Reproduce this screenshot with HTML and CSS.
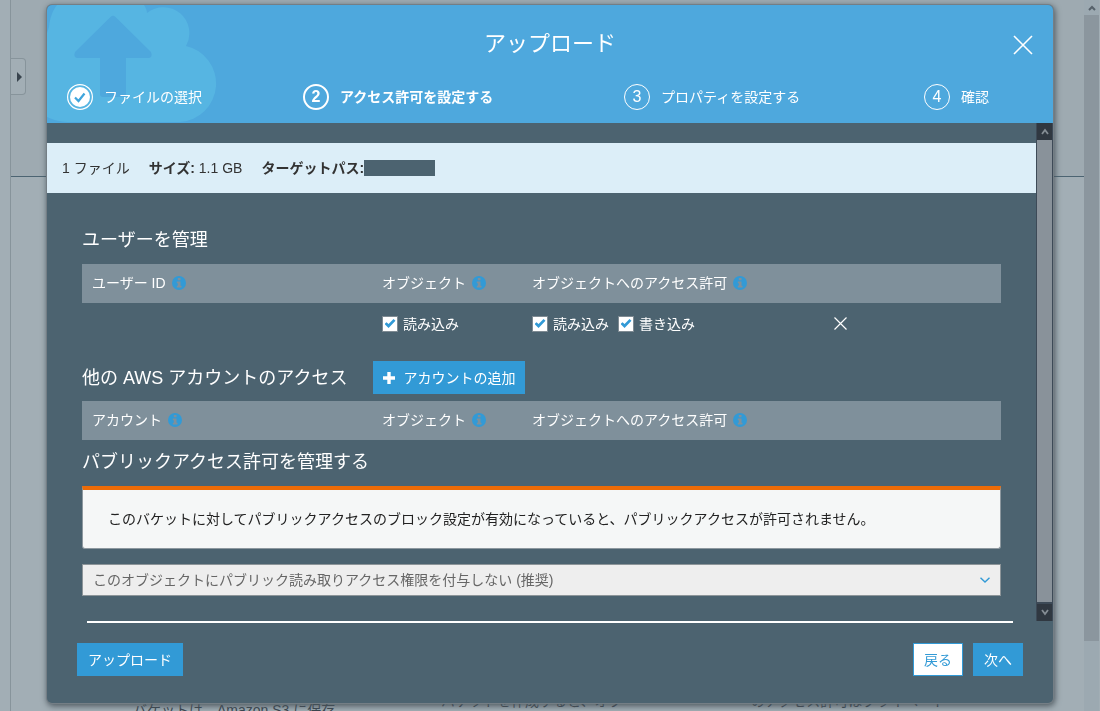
FILE: index.html
```html
<!DOCTYPE html>
<html lang="ja">
<head>
<meta charset="utf-8">
<title>アップロード</title>
<link rel="stylesheet" href="styles.css">
</head>
<body>
<svg class="defs" aria-hidden="true">
  <symbol id="info" viewBox="0 0 14 14"><circle cx="7" cy="7" r="7" fill="#329ad6"/><path d="M5.800 2h2.700v2.200H5.800zM4.800 5.400h3.700v4.400h1V11.600H4.800V9.800h1V7.200h-1z" fill="#7f909b"/></symbol>
</svg>
<div class="page">
  <aside class="rail"></aside>
  <main class="backdrop">
    <button class="rail-tab" type="button" aria-label="メニューを開く"><svg width="5" height="10" viewBox="0 0 5 10"><path d="M0 0L5 5L0 10z" fill="#39444e"/></svg></button>
    <div class="backdrop-top"></div>
    <div class="backdrop-cards">
      <p class="card-low">バケットは、Amazon S3 に保存</p>
      <p>バケットを作成すると、オブ</p>
      <p>のアクセス許可はプライベート</p>
    </div>
  </main>
  <div class="page-scroll"><span class="page-arrow"><svg width="8" height="6" viewBox="0 0 8 6"><path d="M1 5L4 2L7 5" fill="none" stroke="#56616a" stroke-width="2"/></svg></span><span class="page-thumb"></span></div>
</div>

<div class="modal" role="dialog" aria-labelledby="title">
  <header class="header">
    <svg class="cloud" width="170" height="118" viewBox="0 0 170 118" aria-hidden="true">
      <path d="M2 22C3 12 6 5 10 0H97C99 3 100 6 100 8A26 26 0 0 1 139 41A38.500 38.500 0 0 1 133 117H25C14 117 6 115 0 112V28z" fill="#56b5e2"/>
      <path d="M63.500 12Q66 9.500 68.500 12L104 47Q106 53 101 53H79V89Q79 92 76 92H56Q53 92 53 89V53H31Q26 53 28 47z" fill="#4ea8dd"/>
    </svg>
    <h1 id="title">アップロード</h1>
    <button class="close" type="button" aria-label="閉じる"><svg width="20" height="20" viewBox="0 0 20 20"><path d="M1 1L19 19M19 1L1 19" stroke="#fff" stroke-width="1.600"/></svg></button>
    <ol class="steps">
      <li><svg width="26" height="26" viewBox="0 0 26 26" aria-hidden="true"><circle cx="13" cy="13" r="12.400" fill="none" stroke="#fff" stroke-width="1.200"/><circle cx="13" cy="13" r="10" fill="#fff"/><path d="M8 13.500L11.500 17L17.500 9.500" fill="none" stroke="#3fa5dc" stroke-width="2.200"/></svg><span>ファイルの選択</span></li>
      <li class="current"><span class="num">2</span><span>アクセス許可を設定する</span></li>
      <li><span class="num">3</span><span>プロパティを設定する</span></li>
      <li><span class="num">4</span><span>確認</span></li>
    </ol>
  </header>

  <div class="body">
    <div class="content">
      <div class="summary">
        <span>1 ファイル</span>
        <span><b>サイズ:</b> 1.1 GB</span>
        <span class="path"><b>ターゲットパス:</b><span class="redacted"></span></span>
      </div>
      <div class="sections">
        <h2>ユーザーを管理</h2>
        <table>
          <colgroup><col class="c-id"><col class="c-obj"><col class="c-perm"><col></colgroup>
          <thead><tr>
            <th>ユーザー ID<svg class="info"><use href="#info"/></svg></th>
            <th>オブジェクト<svg class="info"><use href="#info"/></svg></th>
            <th>オブジェクトへのアクセス許可<svg class="info"><use href="#info"/></svg></th>
            <th></th>
          </tr></thead>
          <tbody><tr>
            <td></td>
            <td><label><input type="checkbox" checked>読み込み</label></td>
            <td><div class="checks"><label><input type="checkbox" checked>読み込み</label><label><input type="checkbox" checked>書き込み</label></div></td>
            <td><button class="remove" type="button" aria-label="削除"><svg width="13" height="13" viewBox="0 0 13 13"><path d="M.5.5L12.500 12.500M12.500.5L.5 12.500" stroke="#fff" stroke-width="1.200"/></svg></button></td>
          </tr></tbody>
        </table>
        <div class="account-head">
          <h2>他の AWS アカウントのアクセス</h2>
          <button class="btn" type="button"><svg width="12" height="12" viewBox="0 0 12 12"><path d="M6 0V12M0 6H12" stroke="#fff" stroke-width="3.400"/></svg>アカウントの追加</button>
        </div>
        <table>
          <colgroup><col class="c-id"><col class="c-obj"><col class="c-perm"><col></colgroup>
          <thead><tr>
            <th>アカウント<svg class="info"><use href="#info"/></svg></th>
            <th>オブジェクト<svg class="info"><use href="#info"/></svg></th>
            <th>オブジェクトへのアクセス許可<svg class="info"><use href="#info"/></svg></th>
            <th></th>
          </tr></thead>
        </table>
        <h2 class="public-title" id="public">パブリックアクセス許可を管理する</h2>
        <p class="alert">このバケットに対してパブリックアクセスのブロック設定が有効になっていると、パブリックアクセスが許可されません。</p>
        <div class="select">
          <select aria-labelledby="public"><option>このオブジェクトにパブリック読み取りアクセス権限を付与しない (推奨)</option></select>
          <svg width="10" height="6" viewBox="0 0 10 6" aria-hidden="true"><path d="M.5.7L5 5L9.500.7" fill="none" stroke="#329ad6" stroke-width="1.400"/></svg>
        </div>
      </div>
    </div>
    <div class="scrollbar" aria-hidden="true">
      <span class="arrow"><svg width="8" height="7" viewBox="0 0 8 7"><path d="M1 6L4 2L7 6" fill="none" stroke="#858d94" stroke-width="1.800"/></svg></span>
      <span class="thumb"></span>
      <span class="arrow"><svg width="8" height="7" viewBox="0 0 8 7"><path d="M1 1L4 5L7 1" fill="none" stroke="#858d94" stroke-width="1.800"/></svg></span>
    </div>
  </div>

  <footer>
    <hr>
    <div class="actions">
      <button class="btn upload" type="button">アップロード</button>
      <button class="btn back" type="button">戻る</button>
      <button class="btn" type="button">次へ</button>
    </div>
  </footer>
</div>
</body>
</html>
```
FILE: styles.css
```css
* { box-sizing: border-box; }
html, body { height: 100%; }
body {
  margin: 0;
  overflow: hidden;
  background: #a2aeb5;
  color: #fff;
  font: 14px/20px "Liberation Sans", "Noto Sans CJK JP", sans-serif;
}
h1, h2, p, ol { margin: 0; padding: 0; font-weight: normal; }
button, select, input { font: inherit; margin: 0; }
button { cursor: pointer; }
svg { display: block; flex: none; }
.defs { position: absolute; width: 0; height: 0; }

/* Dimmed page */
.page { display: flex; height: 100vh; }
.rail { width: 11px; border-right: 1px solid #87949b; }
.backdrop { flex: 1; display: flex; flex-direction: column; position: relative; overflow: hidden; }
.backdrop-top { height: 177px; flex: none; background: #9eaab1; border-bottom: 1px solid #4c6472; }
.rail-tab {
  position: absolute; top: 58px; left: -1px;
  width: 16px; height: 37px; padding: 0 0 0 7px;
  background: #a2aeb5; border: 1px solid #87949b; border-left: 0; border-radius: 0 4px 4px 0;
}
.backdrop-cards {
  display: grid; grid-template-columns: 308px 310px 1fr;
  margin-top: auto; padding-left: 122px; height: 20px;
  color: #39444e; white-space: nowrap;
}
.card-low { padding-top: 9px; }
.page-scroll { width: 16px; display: flex; flex-direction: column; background: #9ca9b1; border-right: 1px solid #a2aeb5; }
.page-arrow { height: 15px; display: grid; place-items: center; }
.page-thumb { height: 88%; background: #8b969e; }

/* Dialog */
.modal {
  position: fixed; inset: 5px 47px 8px;
  display: flex; flex-direction: column;
  background: #4c6370;
  border-radius: 5px;
  overflow: hidden;
  box-shadow: 0 0 0 1px #747e85, 1px 2px 6px 1px #4b565d;
}
.header { position: relative; flex: none; height: 118px; background: #4ea8dd; }
.cloud { position: absolute; left: 0; top: 0; }
h1 { position: relative; padding-top: 25px; font-size: 22px; line-height: 28px; text-align: center; }
.close { position: absolute; right: 20px; top: 30px; padding: 0; border: 0; background: none; }
.steps {
  position: relative; list-style: none;
  display: grid; grid-template-columns: 236fr 321fr 300fr 129fr;
  padding: 26px 0 0 20px;
}
.steps li { display: flex; align-items: center; gap: 11px; }
.num {
  width: 26px; height: 26px; border: 1px solid #fff; border-radius: 50%;
  font-size: 16px; line-height: 24px; text-align: center;
}
.current { font-weight: bold; }
.current .num { border-width: 2px; line-height: 22px; }

.body { display: flex; flex: 1; min-height: 0; }
.content { flex: 1; min-width: 0; padding-top: 20px; overflow: hidden; }
.summary { display: flex; align-items: center; gap: 19px; height: 50px; padding-left: 15px; background: #dceef8; color: #333; }
.path { display: flex; align-items: center; }
.redacted { width: 71px; height: 16px; background: #4c6370; }
.sections { padding: 35px 35px 0; }
h2 { font-size: 18px; line-height: 24px; }

table { width: 100%; margin-top: 12px; border-collapse: collapse; table-layout: fixed; }
.c-id { width: 290px; }
.c-obj { width: 150px; }
.c-perm { width: 302px; }
th, td { padding: 0 10px; text-align: left; font-weight: normal; }
th { height: 39px; padding-bottom: 2px; background: #7f909b; }
td { height: 42px; padding-bottom: 1px; }
.info { display: inline-block; width: 14px; height: 14px; margin-left: 6px; vertical-align: -2px; }
label, .checks { display: flex; align-items: center; }
label { gap: 5px; }
.checks { gap: 9px; }
input[type="checkbox"] {
  appearance: none; width: 16px; height: 16px;
  display: grid; place-items: center;
  background: #fff; border: 1px solid #7f8b93;
}
input[type="checkbox"]:checked::before {
  content: ""; width: 11px; height: 9px; background: #329ad6;
  clip-path: polygon(0 56%, 18% 36%, 37% 56%, 82% 0, 100% 20%, 37% 100%);
}
.remove { display: block; padding: 0; border: 0; background: none; }

.account-head { display: flex; align-items: center; gap: 26px; margin-top: 16px; }
.account-head + table { margin-top: 7px; }
.btn {
  display: flex; align-items: center; gap: 8px;
  height: 33px; padding: 0 10px;
  border: 1px solid #329ad6; background: #329ad6; color: #fff;
}
.account-head .btn { padding: 0 9px; }
.public-title { margin-top: 10px; }
.alert {
  margin-top: 12px; height: 63px; padding: 19px 25px;
  background: #f5f7f7; color: #222;
  border: 1px solid #8d989f; border-top: 4px solid #ed6b06;
  border-radius: 0 0 3px 3px;
}
.select { position: relative; margin-top: 15px; }
select {
  display: block; width: 100%; height: 32px; padding: 0 30px 0 10px;
  appearance: none; border: 1px solid #8d9599; border-radius: 0;
  background: #eee; color: #666;
}
.select svg { position: absolute; right: 11px; top: 13px; }

.scrollbar { display: flex; flex-direction: column; width: 17px; padding: 0 1px; background: #3d4a57; }
.arrow { height: 17px; display: grid; place-items: center; background: #303841; }
.thumb { flex: 1; margin-bottom: 2px; background: #89929a; }

footer { flex: none; padding: 0 30px 27px; }
hr { margin: 0 10px 20px; height: 2px; border: 0; background: #fff; }
.actions { display: flex; gap: 10px; }
.upload { margin-right: auto; }
.back { background: #fff; color: #329ad6; }
```
